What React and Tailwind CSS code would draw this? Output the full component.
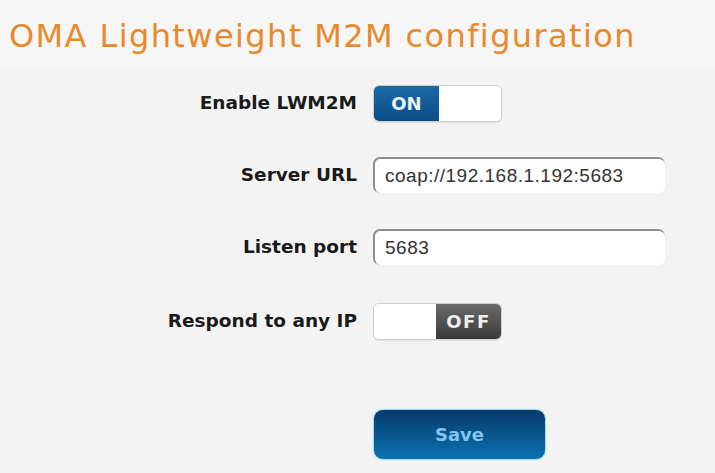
export default function App() {
  const Label = ({ children }) => (
    <div className="text-right text-[18.5px] font-bold text-[#1a1a1a] font-['DejaVu_Sans',sans-serif] leading-none">
      {children}
    </div>
  );

  const Toggle = ({ on }) => (
    <div className="flex h-[37px] w-[129px] overflow-hidden rounded-[6px] border border-[#cfcfcf] bg-white shadow-[0_1px_1px_rgba(0,0,0,0.08)]">
      {on ? (
        <>
          <div className="flex w-[65px] items-center justify-center bg-gradient-to-b from-[#1b6aa6] to-[#0a4d86] text-[18px] font-bold text-[#e8f3fb] font-['DejaVu_Sans',sans-serif]">
            ON
          </div>
          <div className="flex-1 rounded-[5px] bg-white" />
        </>
      ) : (
        <>
          <div className="flex-1 rounded-[5px] bg-white" />
          <div className="flex w-[65px] items-center justify-center bg-gradient-to-b from-[#6b6b6b] to-[#3a3a3a] text-[18px] font-bold tracking-[1.5px] text-[#eeeeee] font-['DejaVu_Sans',sans-serif]">
            OFF
          </div>
        </>
      )}
    </div>
  );

  const Field = ({ value }) => (
    <div className="flex h-[36px] w-[292px] items-center rounded-[7px] border-t-2 border-l-2 border-[#8c8c8c] bg-white pl-[10px] text-[19px] tracking-[0.5px] text-[#333] font-['Liberation_Sans',sans-serif]">
      {value}
    </div>
  );

  return (
    <div className="h-[473px] w-[715px] bg-[#f3f3f3] overflow-hidden">
      <div className="h-[70px] bg-[#f6f6f7] pl-[9px] pt-[20px]">
        <h1 className="text-[32px] leading-none tracking-[1.4px] text-[#e8892c] font-['DejaVu_Sans',sans-serif] font-normal">
          OMA Lightweight M2M configuration
        </h1>
      </div>

      <div className="mt-[15px] grid grid-cols-[357px_auto] items-center gap-x-[16px]">
        <Label>Enable LWM2M</Label>
        <Toggle on />

        <div className="col-span-2 h-[35px]" />
        <Label>Server URL</Label>
        <Field value="coap://192.168.1.192:5683" />

        <div className="col-span-2 h-[36px]" />
        <Label>Listen port</Label>
        <Field value="5683" />

        <div className="col-span-2 h-[38px]" />
        <Label>Respond to any IP</Label>
        <Toggle on={false} />

        <div className="col-span-2 h-[69px]" />
        <div />
        <button className="flex h-[51px] w-[173px] items-center justify-center rounded-[10px] border border-[#9fdcf8] bg-gradient-to-b from-[#063a6a] to-[#0b72b1] text-[18px] font-bold text-[#80c6ec] font-['DejaVu_Sans',sans-serif] shadow-[0_0_2px_#bfe9fb]">
          Save
        </button>
      </div>
    </div>
  );
}
